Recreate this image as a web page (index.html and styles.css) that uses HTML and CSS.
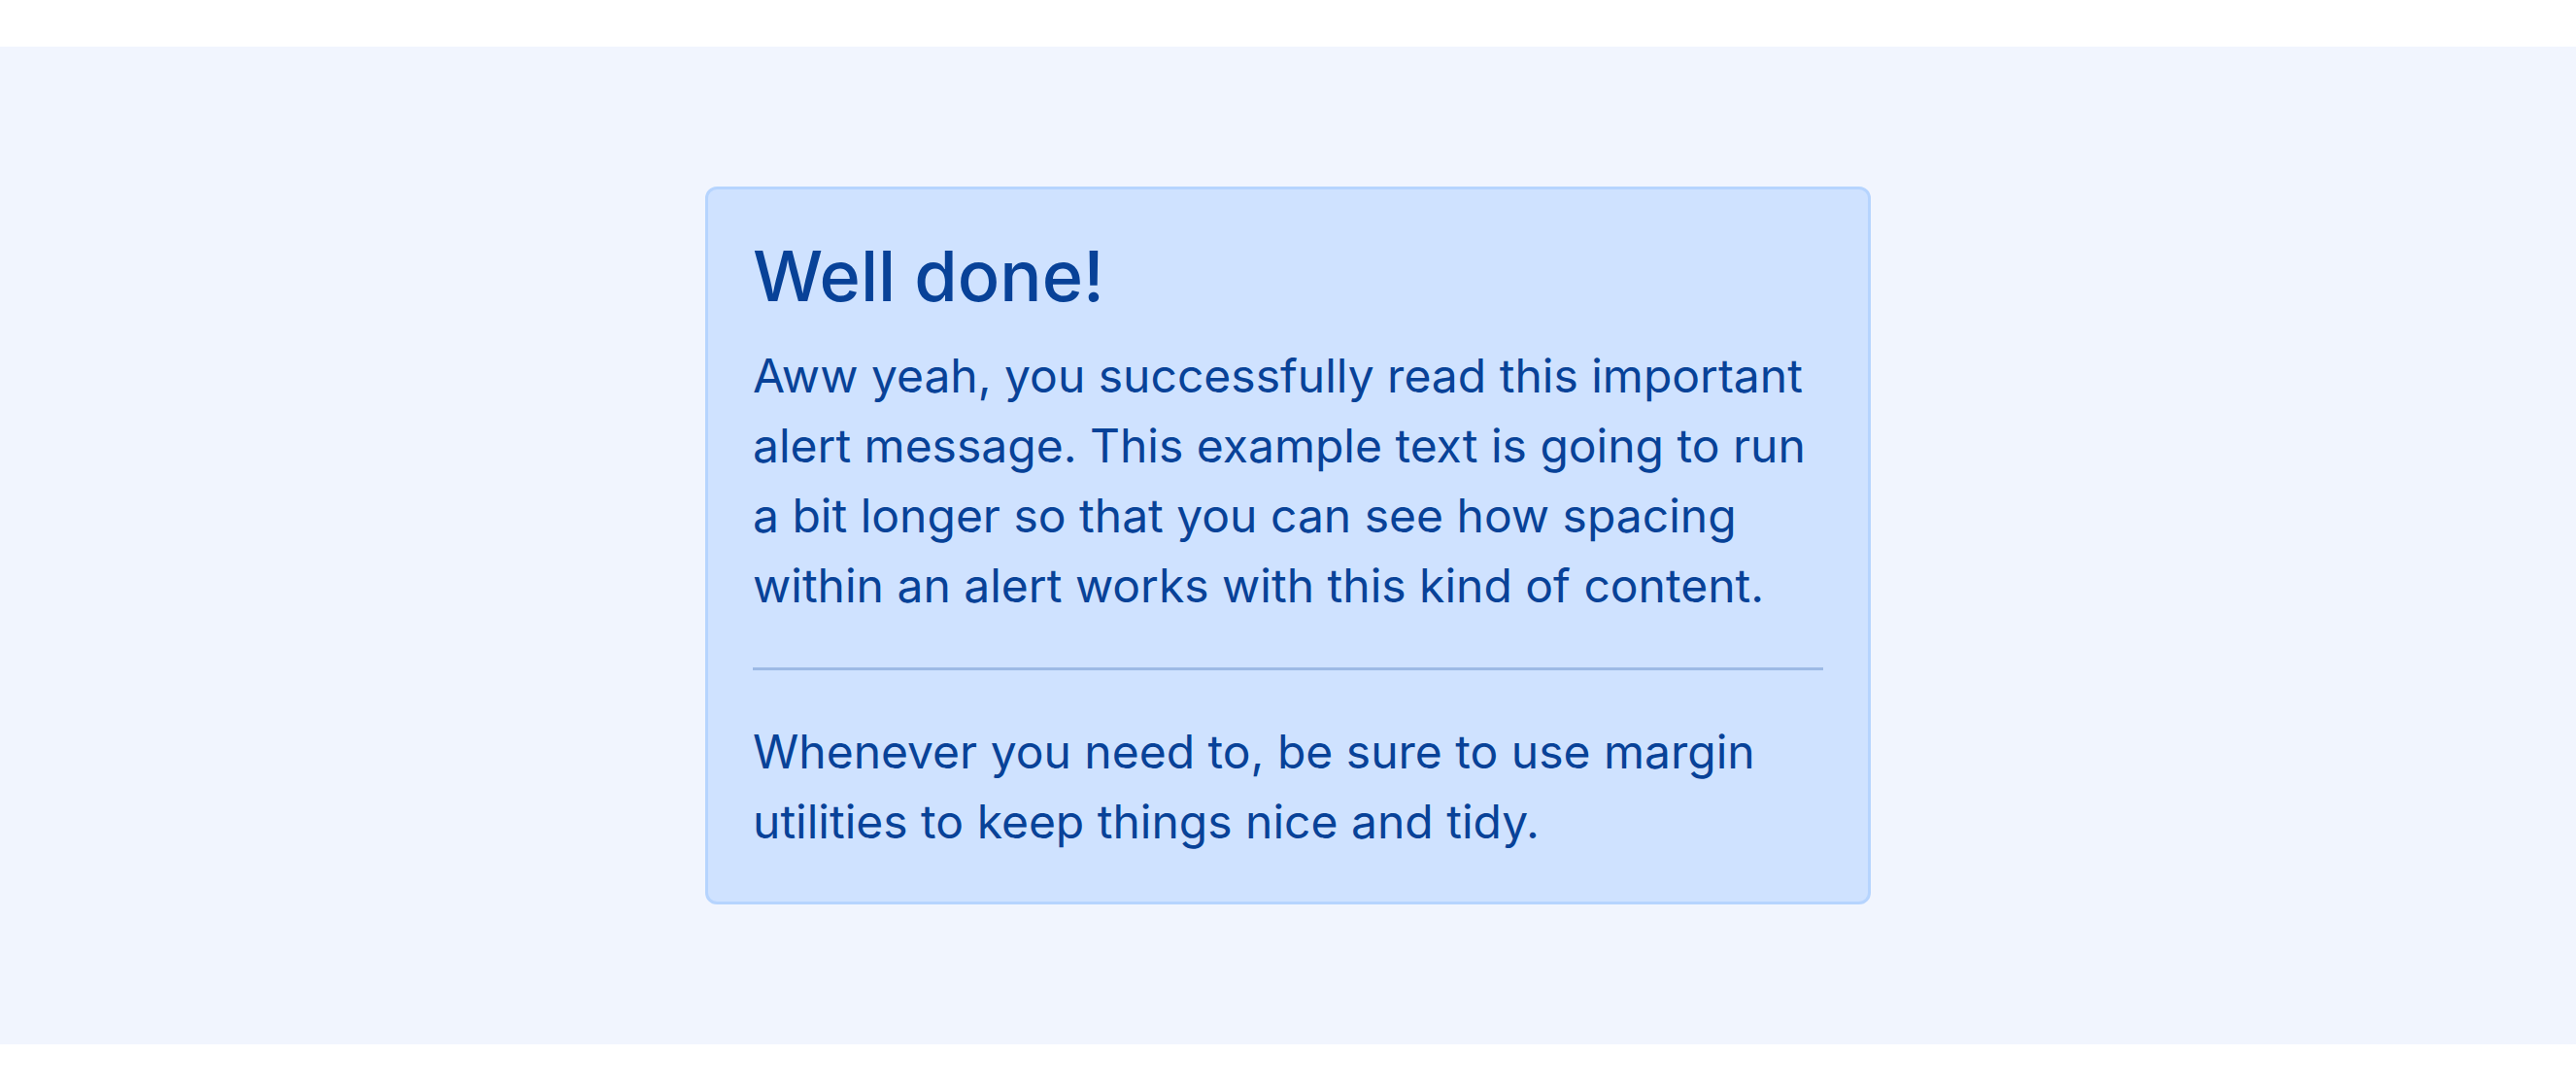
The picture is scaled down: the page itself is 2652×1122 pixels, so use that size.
FILE: index.html
```html
<!DOCTYPE html>
<html lang="en">
<head>
<meta charset="utf-8">
<title>Alert</title>
<link rel="stylesheet" href="styles.css">
</head>
<body>
<section class="stage">
  <div class="alert" role="alert">
    <h4 class="alert-heading">Well done!</h4>
    <p class="alert-text">Aww yeah, you successfully read this important alert message. This example text is going to run a bit longer so that you can see how spacing within an alert works with this kind of content.</p>
    <hr class="alert-rule">
    <p class="alert-text alert-last">Whenever you need to, be sure to use margin utilities to keep things nice and tidy.</p>
  </div>
</section>
</body>
</html>
```

FILE: styles.css
```css
html, body {
  margin: 0;
  padding: 0;
  background: #ffffff;
}
body {
  padding: 48px 0;
  font-family: Inter, "Noto Sans", sans-serif;
}
.stage {
  background: #f1f5fe;
  padding: 144px 0;
  display: flex;
  justify-content: center;
}
.alert {
  box-sizing: border-box;
  width: 1200px;
  background: #cfe2ff;
  border: 3px solid #b6d4fe;
  border-radius: 12px;
  padding: 46px 46px;
  color: #084298;
}
.alert-heading {
  margin: 0 0 24px;
  font-size: 72px;
  font-weight: 500;
  line-height: 1.2;
}
.alert-text {
  margin: 0 0 48px;
  font-size: 48px;
  font-weight: 400;
  line-height: 72px;
}
.alert-last {
  margin-bottom: 0;
}
.alert-rule {
  margin: 0 0 48px;
  border: 0;
  height: 3px;
  background: #9dbae5;
}
```
